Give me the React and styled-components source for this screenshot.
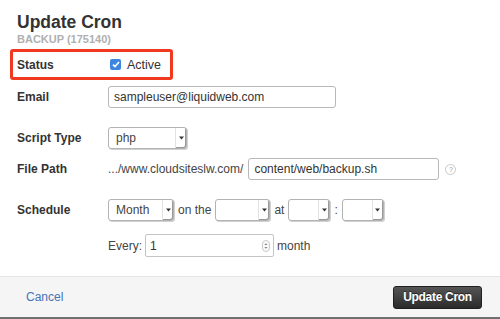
import React from 'react';
import styled, { createGlobalStyle } from 'styled-components';

const GlobalStyle = createGlobalStyle`
    html, body {
        margin: 0;
        padding: 0;
        background: #fff;
    }
    body {
        font-family: "Liberation Sans", Arial, sans-serif;
        color: #333;
    }
`;

const Dialog = styled.div`
    width: 500px;
    height: 319px;
    display: flex;
    flex-direction: column;
    background: #fff;
    overflow: hidden;
`;

const Header = styled.div`
    padding: 12px 0 0 17px;
`;

const Title = styled.h2`
    margin: 0;
    font-size: 17.5px;
    line-height: 20px;
    font-weight: bold;
    color: #333;
`;

const Subtitle = styled.div`
    margin-top: 1px;
    font-size: 11px;
    line-height: 13px;
    font-weight: bold;
    color: #b0b0b0;
`;

const Body = styled.div`
    flex: 1;
    display: flex;
    flex-direction: column;
`;

const Highlight = styled.div`
    margin: 3px 0 0 10px;
    width: 153px;
    height: 25px;
    border: 3px solid #f0391f;
    border-radius: 3px;
    padding-left: 4px;
    display: grid;
    grid-template-columns: 91px auto;
    align-items: center;
`;

const Row = styled.div`
    margin-top: ${(p) => p.top || 0}px;
    padding-left: ${(p) => p.indent || 17}px;
    display: grid;
    grid-template-columns: ${(p) => (p.noLabel ? 'auto' : '91px auto')};
    align-items: center;
    justify-content: start;
`;

const Label = styled.div`
    font-size: 12px;
    font-weight: bold;
    color: #333;
`;

const Controls = styled.div`
    display: flex;
    align-items: center;
    gap: ${(p) => p.gap || 3}px;
    font-size: 12px;
    color: #444;
`;

const Check = styled.span`
    width: 11px;
    height: 11px;
    border-radius: 2px;
    background: #3d86e0;
    display: inline-flex;
    align-items: center;
    justify-content: center;
    margin: 0 3px 0 2px;
`;

const CheckText = styled.span`
    font-size: 12.5px;
    color: #333;
`;

const TextField = styled.input`
    box-sizing: border-box;
    width: ${(p) => p.w}px;
    height: ${(p) => p.h || 22}px;
    border: 1px solid #b8b8b8;
    border-radius: 3px;
    padding: 0 5px;
    font-family: "Liberation Sans", Arial, sans-serif;
    font-size: 12px;
    color: #333;
    background: #fff;
    outline: none;
`;

const Select = styled.div`
    box-sizing: border-box;
    width: ${(p) => p.w}px;
    height: ${(p) => p.h || 22}px;
    border: 1px solid #b3b3b3;
    border-radius: 3px;
    background: #fff;
    display: flex;
    align-items: stretch;
    box-shadow: 1px 1px 0 rgba(0, 0, 0, 0.18);
`;

const SelectValue = styled.span`
    flex: 1;
    display: flex;
    align-items: center;
    padding-left: 7px;
    font-size: 12px;
    color: #444;
`;

const Arrow = styled.span`
    width: 10px;
    display: flex;
    align-items: center;
    justify-content: center;
    border-left: 1px solid #e2e2e2;
    box-shadow: inset -1px -1px 0 #9a9a9a;
    border-radius: 0 2px 2px 0;
`;

const Path = styled.span`
    font-size: 12px;
    color: #444;
    margin-right: 2px;
`;

const Help = styled.span`
    width: 9px;
    height: 9px;
    border: 1px solid #c8c8c8;
    border-radius: 50%;
    font-size: 7px;
    line-height: 9px;
    text-align: center;
    color: #999;
    margin-left: 3px;
`;

const NumberField = styled.div`
    box-sizing: border-box;
    width: 129px;
    height: 23px;
    border: 1px solid #c4c4c4;
    border-radius: 2px;
    display: flex;
    align-items: center;
    justify-content: space-between;
    padding: 0 3px 0 4px;
    font-size: 12px;
    color: #333;
`;

const Footer = styled.div`
    height: 40px;
    border-top: 1px solid #e4e4e4;
    border-bottom: 2px solid #707070;
    background: #f5f5f5;
    display: flex;
    align-items: center;
    justify-content: space-between;
    padding: 0 18px 0 26px;
`;

const CancelLink = styled.a`
    font-size: 12px;
    color: #4573b5;
    text-decoration: none;
`;

const PrimaryButton = styled.button`
    width: 89px;
    height: 23px;
    border: 1px solid #1f1f1f;
    border-radius: 3px;
    background: linear-gradient(#555, #2b2b2b);
    color: #fff;
    font-family: "Liberation Sans", Arial, sans-serif;
    font-size: 12px;
    font-weight: bold;
    letter-spacing: -0.3px;
    padding: 0;
    text-shadow: 0 -1px 0 rgba(0, 0, 0, 0.5);
`;

function ArrowIcon() {
    return (
        <svg width="5" height="4" viewBox="0 0 5 4">
            <path d="M0 0.5h5L2.5 3.5z" fill="#333"/>
        </svg>
    );
}

function Dropdown({ w, value }) {
    return (
        <Select w={w}>
            <SelectValue>{value}</SelectValue>
            <Arrow><ArrowIcon/></Arrow>
        </Select>
    );
}

function Spinner() {
    return (
        <svg width="8" height="12" viewBox="0 0 8 12">
            <rect x="0.5" y="0.5" width="7" height="11" rx="3.5" fill="#fafafa" stroke="#c9c9c9"/>
            <path d="M2.3 5L4 3.2 5.7 5z M2.3 7L4 8.8 5.7 7z" fill="#888"/>
        </svg>
    );
}

function App() {
    return (
        <Dialog>
            <GlobalStyle/>
            <Header>
                <Title>{'Update Cron'}</Title>
                <Subtitle>{'BACKUP (175140)'}</Subtitle>
            </Header>

            <Body>
                <Highlight>
                    <Label>{'Status'}</Label>
                    <Controls gap={0}>
                        <Check>
                            <svg width="8" height="7" viewBox="0 0 8 7">
                                <path d="M1 3.6l2 2L7 1" fill="none" stroke="#fff" strokeWidth="1.6"/>
                            </svg>
                        </Check>
                        <CheckText>{'Active'}</CheckText>
                    </Controls>
                </Highlight>

                <Row top={6}>
                    <Label>{'Email'}</Label>
                    <TextField w={228} readOnly value="sampleuser@liquidweb.com"/>
                </Row>

                <Row top={19}>
                    <Label>{'Script Type'}</Label>
                    <Dropdown w={79} value="php"/>
                </Row>

                <Row top={9}>
                    <Label>{'File Path'}</Label>
                    <Controls gap={0}>
                        <Path>{'.../www.cloudsiteslw.com/'}</Path>
                        <TextField w={191} readOnly value="content/web/backup.sh"/>
                        <Help>{'?'}</Help>
                    </Controls>
                </Row>

                <Row top={19}>
                    <Label>{'Schedule'}</Label>
                    <Controls gap={4}>
                        <Dropdown w={66} value="Month"/>
                        <span>{'on the'}</span>
                        <Dropdown w={55} value=""/>
                        <span>{'at'}</span>
                        <Dropdown w={42} value=""/>
                        <span>{':'}</span>
                        <Dropdown w={42} value=""/>
                    </Controls>
                </Row>

                <Row top={13} indent={108} noLabel>
                    <Controls gap={3}>
                        <span>{'Every:'}</span>
                        <NumberField>
                            <span>{'1'}</span>
                            <Spinner/>
                        </NumberField>
                        <span>{'month'}</span>
                    </Controls>
                </Row>
            </Body>

            <Footer>
                <CancelLink href="#">{'Cancel'}</CancelLink>
                <PrimaryButton>{'Update Cron'}</PrimaryButton>
            </Footer>
        </Dialog>
    );
}

export default App;
